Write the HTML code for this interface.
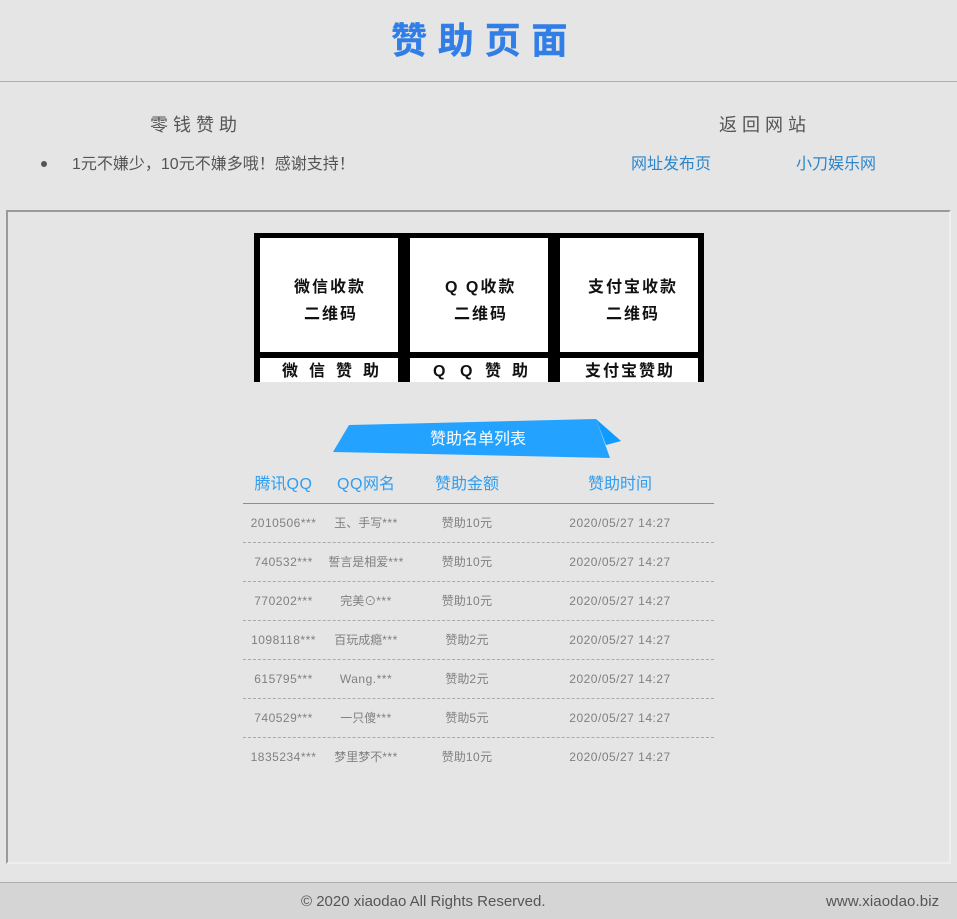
<!DOCTYPE html>
<html lang="zh-CN">
<head>
<meta charset="utf-8">
<title>赞助页面</title>
<style>
html,body{margin:0;padding:0;width:957px;height:919px;overflow:hidden;background:#e5e5e5;}
body{position:relative;font-family:"Liberation Sans","Noto Sans CJK SC",sans-serif;font-size:13px;}
.a{position:absolute;white-space:nowrap;}
.r{position:absolute;height:20px;line-height:20px;margin-top:-1px;color:#808080;font-size:12px;white-space:nowrap;transform:translateX(-50%);}
.r i{font-style:normal;letter-spacing:.5px;}
.h{position:absolute;top:474px;height:22px;line-height:22px;color:#2f9df0;font-size:16px;white-space:nowrap;transform:translateX(-50%);}
.h i{font-style:normal;letter-spacing:.6px;}
.d{position:absolute;left:243px;width:471px;height:0;border-top:1px dashed #aaa;}
.w{position:absolute;background:#fff;}
.p{position:absolute;color:#111;font-size:16px;line-height:20px;font-weight:bold;white-space:nowrap;}
</style>
</head>
<body>
<div class="a" style="left:391px;top:16px;height:50px;line-height:50px;font-size:36px;font-weight:bold;letter-spacing:10.8px;color:#317ee6;-webkit-text-stroke:.4px #317ee6;">赞助页面</div>
<div class="a" style="left:0;top:81px;width:957px;height:1px;background:#aeaeae;"></div>

<div class="a" style="left:150px;top:113px;height:24px;line-height:24px;font-size:18px;letter-spacing:5px;color:#555;">零钱赞助</div>
<div class="a" style="left:41px;top:161px;width:6px;height:6px;border-radius:50%;background:#555;"></div>
<div class="a" style="left:72px;top:154px;height:22px;line-height:22px;font-size:16px;color:#555;">1元不嫌少，10元不嫌多哦！感谢支持！</div>

<div class="a" style="left:719px;top:113px;height:24px;line-height:24px;font-size:18px;letter-spacing:5px;color:#555;">返回网站</div>
<div class="a" style="left:631px;top:154px;height:22px;line-height:22px;font-size:16px;color:#2d86c9;">网址发布页</div>
<div class="a" style="left:796px;top:154px;height:22px;line-height:22px;font-size:16px;color:#2d86c9;">小刀娱乐网</div>

<div class="a" style="left:6px;top:210px;width:941px;height:650px;border-style:solid;border-width:2px;border-color:#9a9a9a #eeeeee #eeeeee #9a9a9a;"></div>

<div class="a" style="left:254px;top:233px;width:450px;height:149px;background:#000;"></div>
<div class="w" style="left:260px;top:238px;width:138px;height:114px;"></div>
<div class="w" style="left:410px;top:238px;width:138px;height:114px;"></div>
<div class="w" style="left:560px;top:238px;width:138px;height:114px;"></div>
<div class="w" style="left:260px;top:358px;width:138px;height:24px;"></div>
<div class="w" style="left:410px;top:358px;width:138px;height:24px;"></div>
<div class="w" style="left:560px;top:358px;width:138px;height:24px;"></div>

<div class="p" style="left:294px;top:278px;letter-spacing:2px;">微信收款</div>
<div class="p" style="left:304px;top:305px;letter-spacing:2px;">二维码</div>
<div class="p" style="left:445px;top:278px;letter-spacing:2px;">Q Q收款</div>
<div class="p" style="left:454px;top:305px;letter-spacing:2px;">二维码</div>
<div class="p" style="left:588px;top:278px;letter-spacing:2px;">支付宝收款</div>
<div class="p" style="left:606px;top:305px;letter-spacing:2px;">二维码</div>
<div class="p" style="left:282px;top:362px;letter-spacing:11px;">微信赞助</div>
<div class="p" style="left:433px;top:362px;">Q</div>
<div class="p" style="left:460px;top:362px;">Q</div>
<div class="p" style="left:485px;top:362px;letter-spacing:11px;">赞助</div>
<div class="p" style="left:585px;top:362px;letter-spacing:2px;">支付宝赞助</div>

<svg class="a" style="left:325px;top:412px;" width="305" height="52" viewBox="325 412 305 52">
<polygon points="596,419 621,441 606,445" fill="#0f9bff"/>
<polygon points="349,425 596,419 610,458 333,452" fill="#23a3ff"/>
</svg>
<div class="a" style="left:430px;top:429px;height:22px;line-height:22px;font-size:16px;color:#fff;">赞助名单列表</div>

<div class="h" style="left:283.5px;">腾讯<i>QQ</i></div>
<div class="h" style="left:366px;"><i>QQ</i>网名</div>
<div class="h" style="left:467px;">赞助金额</div>
<div class="h" style="left:620px;">赞助时间</div>
<div class="a" style="left:243px;top:503px;width:471px;height:1px;background:#8d8d8d;"></div>

<div class="r" style="left:283.5px;top:514px;"><i>2010506***</i></div>
<div class="r" style="left:366px;top:514px;">玉、手写<i>***</i></div>
<div class="r" style="left:467px;top:514px;">赞助<i>10</i>元</div>
<div class="r" style="left:620px;top:514px;"><i>2020/05/27 14:27</i></div>
<div class="d" style="top:542px;"></div>

<div class="r" style="left:283.5px;top:553px;"><i>740532***</i></div>
<div class="r" style="left:366px;top:553px;">誓言是相爱<i>***</i></div>
<div class="r" style="left:467px;top:553px;">赞助<i>10</i>元</div>
<div class="r" style="left:620px;top:553px;"><i>2020/05/27 14:27</i></div>
<div class="d" style="top:581px;"></div>

<div class="r" style="left:283.5px;top:592px;"><i>770202***</i></div>
<div class="r" style="left:366px;top:592px;">完美⊙<i>***</i></div>
<div class="r" style="left:467px;top:592px;">赞助<i>10</i>元</div>
<div class="r" style="left:620px;top:592px;"><i>2020/05/27 14:27</i></div>
<div class="d" style="top:620px;"></div>

<div class="r" style="left:283.5px;top:631px;"><i>1098118***</i></div>
<div class="r" style="left:366px;top:631px;">百玩成瘾<i>***</i></div>
<div class="r" style="left:467px;top:631px;">赞助<i>2</i>元</div>
<div class="r" style="left:620px;top:631px;"><i>2020/05/27 14:27</i></div>
<div class="d" style="top:659px;"></div>

<div class="r" style="left:283.5px;top:670px;"><i>615795***</i></div>
<div class="r" style="left:366px;top:670px;"><i>Wang.***</i></div>
<div class="r" style="left:467px;top:670px;">赞助<i>2</i>元</div>
<div class="r" style="left:620px;top:670px;"><i>2020/05/27 14:27</i></div>
<div class="d" style="top:698px;"></div>

<div class="r" style="left:283.5px;top:709px;"><i>740529***</i></div>
<div class="r" style="left:366px;top:709px;">一只傻<i>***</i></div>
<div class="r" style="left:467px;top:709px;">赞助<i>5</i>元</div>
<div class="r" style="left:620px;top:709px;"><i>2020/05/27 14:27</i></div>
<div class="d" style="top:737px;"></div>

<div class="r" style="left:283.5px;top:748px;"><i>1835234***</i></div>
<div class="r" style="left:366px;top:748px;">梦里梦不<i>***</i></div>
<div class="r" style="left:467px;top:748px;">赞助<i>10</i>元</div>
<div class="r" style="left:620px;top:748px;"><i>2020/05/27 14:27</i></div>

<div class="a" style="left:0;top:882px;width:957px;height:37px;background:#d5d5d5;border-top:1px solid #aeaeae;box-sizing:border-box;"></div>
<div class="a" style="left:301px;top:892px;height:20px;line-height:20px;font-size:15px;color:#555;">© 2020 xiaodao All Rights Reserved.</div>
<div class="a" style="left:826px;top:892px;height:20px;line-height:20px;font-size:15px;letter-spacing:.1px;color:#555;">www.xiaodao.biz</div>
</body>
</html>
